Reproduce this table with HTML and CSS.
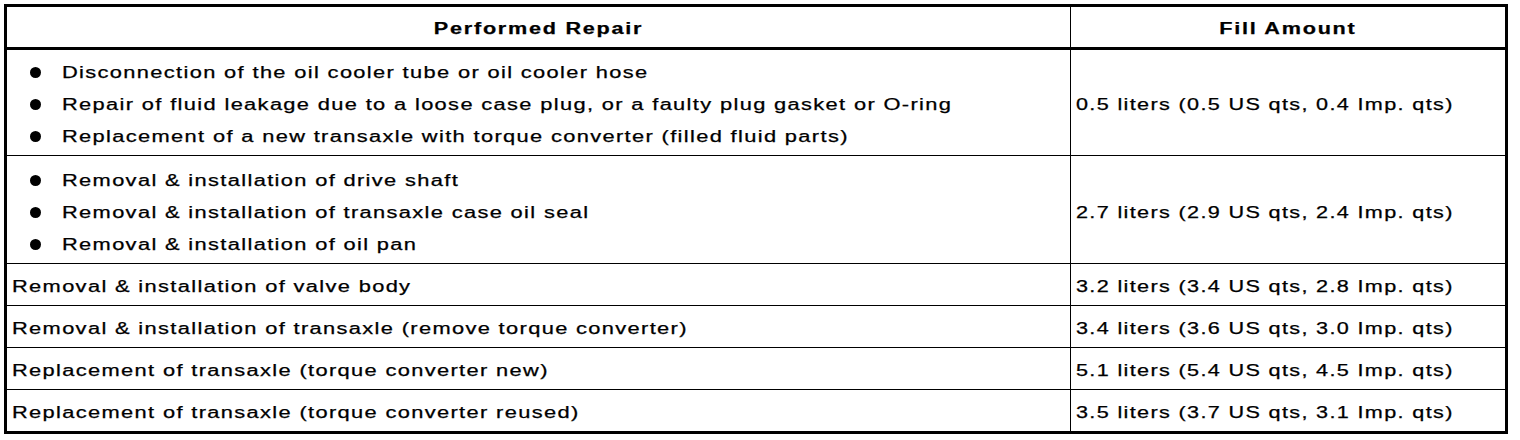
FILE: index.html
```html
<!DOCTYPE html>
<html>
<head>
<meta charset="utf-8">
<link rel="stylesheet" href="styles.css">
</head>
<body>
<div class="table">
  <div class="row head">
    <div class="cell c1"><span class="t">Performed Repair</span></div>
    <div class="cell c2"><span class="t">Fill Amount</span></div>
  </div>
  <div class="row tall r1">
    <div class="cell c1">
      <ul class="list">
        <li><span class="dot"></span><span class="t">Disconnection of the oil cooler tube or oil cooler hose</span></li>
        <li><span class="dot"></span><span class="t">Repair of fluid leakage due to a loose case plug, or a faulty plug gasket or O-ring</span></li>
        <li><span class="dot"></span><span class="t">Replacement of a new transaxle with torque converter (filled fluid parts)</span></li>
      </ul>
    </div>
    <div class="cell c2"><span class="t">0.5 liters (0.5 US qts, 0.4 Imp. qts)</span></div>
  </div>
  <div class="row tall r2">
    <div class="cell c1">
      <ul class="list">
        <li><span class="dot"></span><span class="t">Removal &amp; installation of drive shaft</span></li>
        <li><span class="dot"></span><span class="t">Removal &amp; installation of transaxle case oil seal</span></li>
        <li><span class="dot"></span><span class="t">Removal &amp; installation of oil pan</span></li>
      </ul>
    </div>
    <div class="cell c2"><span class="t">2.7 liters (2.9 US qts, 2.4 Imp. qts)</span></div>
  </div>
  <div class="row">
    <div class="cell c1"><span class="t">Removal &amp; installation of valve body</span></div>
    <div class="cell c2"><span class="t">3.2 liters (3.4 US qts, 2.8 Imp. qts)</span></div>
  </div>
  <div class="row">
    <div class="cell c1"><span class="t">Removal &amp; installation of transaxle (remove torque converter)</span></div>
    <div class="cell c2"><span class="t">3.4 liters (3.6 US qts, 3.0 Imp. qts)</span></div>
  </div>
  <div class="row">
    <div class="cell c1"><span class="t">Replacement of transaxle (torque converter new)</span></div>
    <div class="cell c2"><span class="t">5.1 liters (5.4 US qts, 4.5 Imp. qts)</span></div>
  </div>
  <div class="row last">
    <div class="cell c1"><span class="t">Replacement of transaxle (torque converter reused)</span></div>
    <div class="cell c2"><span class="t">3.5 liters (3.7 US qts, 3.1 Imp. qts)</span></div>
  </div>
</div>
</body>
</html>
```

FILE: styles.css
```css
html, body {
  margin: 0;
  padding: 0;
  background: #fff;
}
body {
  padding: 4px;
  font-family: "Liberation Sans", Arial, Helvetica, sans-serif;
  font-size: 16px;
  color: #000;
}
.table {
  width: 1504px;
  box-sizing: border-box;
  border: 3px solid #000;
}
.row {
  display: grid;
  grid-template-columns: 1064px 1fr;
  border-bottom: 1px solid #000;
}
.row.last {
  border-bottom: none;
}
.row.head {
  border-bottom: 3px solid #000;
  font-weight: bold;
}
.cell {
  box-sizing: border-box;
  display: flex;
  align-items: center;
  padding: 4px 0 0 5px;
  height: 41px;
  line-height: 32px;
  white-space: nowrap;
}
.c1 {
  border-right: 1px solid #000;
}
.t {
  display: inline-block;
  letter-spacing: 1px;
  transform: scaleX(1.35);
  transform-origin: left center;
  -webkit-text-stroke: 0.25px #000;
}
.c1 .t {
  transform: scaleX(1.363);
}
.head .cell {
  justify-content: center;
  padding: 3px 0 0 0;
  height: 40px;
}
.head .t,
.head .c1 .t {
  letter-spacing: 1.3px;
  transform: scaleX(1.35);
  transform-origin: center center;
}
.tall .cell {
  height: 105px;
}
.r2 .cell {
  height: 107px;
  padding-top: 6px;
}
.list {
  list-style: none;
  margin: 0;
  padding: 0 0 0 18px;
}
.list li {
  display: flex;
  align-items: center;
}
.dot {
  flex: none;
  display: inline-block;
  width: 11px;
  height: 11px;
  border-radius: 50%;
  background: #000;
  margin-right: 21px;
}
```
